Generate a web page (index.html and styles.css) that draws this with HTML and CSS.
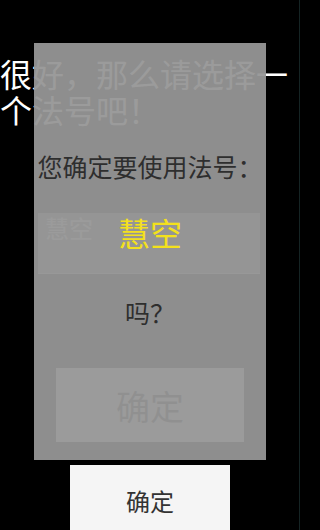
FILE: index.html
```html
<!DOCTYPE html>
<html lang="zh-CN">
<head>
<meta charset="utf-8">
<title>法号</title>
<link rel="stylesheet" href="styles.css">
</head>
<body>
<div class="screen">
  <div class="page">
    <p class="title">很好，那么请选择一个法号吧！</p>
    <div class="field">慧空</div>
    <div class="btn-inner">确定</div>
    <div class="btn-bottom">确定</div>
  </div>
  <div class="dialog">
    <p class="ask">您确定要使用法号：</p>
    <p class="name">慧空</p>
    <p class="ask ask-end">吗？</p>
  </div>
</div>
</body>
</html>
```

FILE: styles.css
```css
html, body {
  margin: 0;
  padding: 0;
  background: #000;
}
body {
  width: 300px;
  height: 530px;
  overflow: hidden;
  font-family: "Noto Sans CJK SC", "Noto Sans", sans-serif;
}
.screen {
  position: relative;
  width: 300px;
  height: 530px;
  overflow: hidden;
  background: #000;
  box-shadow: inset -1px 0 0 #152424;
}
.page {
  display: flex;
  flex-direction: column;
  align-items: center;
}
.title {
  align-self: stretch;
  margin: 0;
  padding-top: 55px;
  color: #fff;
  font-size: 32px;
  line-height: 36px;
}
.field {
  align-self: stretch;
  margin: 86px 40px 0 38px;
  height: 61px;
  box-sizing: border-box;
  padding: 3px 7px 0;
  background: #8a8a8a;
  border-bottom: 1px solid #c8c8c8;
  color: #fff;
  font-size: 24px;
  line-height: 24px;
}
.btn-inner {
  margin-top: 94px;
  width: 188px;
  height: 74px;
  display: flex;
  align-items: center;
  justify-content: center;
  background: #f5f5f5;
  color: #333;
  font-size: 34px;
}
.btn-bottom {
  margin-top: 23px;
  width: 160px;
  height: 70px;
  display: flex;
  align-items: center;
  justify-content: center;
  background: #f5f5f5;
  color: #333;
  font-size: 24px;
}
.dialog {
  position: absolute;
  left: 34px;
  top: 43px;
  width: 232px;
  height: 417px;
  box-sizing: border-box;
  padding-top: 108px;
  background: rgba(150, 150, 150, 0.95);
  display: flex;
  flex-direction: column;
  align-items: center;
}
.ask {
  margin: 0;
  color: #2e2e2e;
  font-size: 25px;
  line-height: 30px;
  white-space: nowrap;
}
.name {
  margin: 31px 0 0;
  color: #f3e11c;
  font-size: 32px;
  line-height: 40px;
}
.ask-end {
  margin-top: 45px;
}
```
